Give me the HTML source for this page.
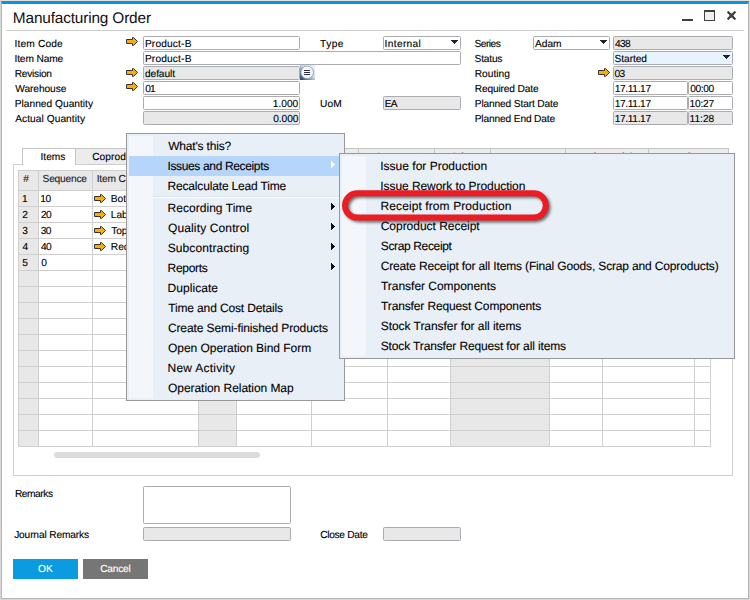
<!DOCTYPE html>
<html><head><meta charset="utf-8"><title>Manufacturing Order</title>
<style>
*{box-sizing:border-box;margin:0;padding:0}
html,body{width:750px;height:600px;overflow:hidden;background:#fff}
body{position:relative;font-family:"Liberation Sans",sans-serif;font-size:11px;color:#000}
.a{position:absolute}
.win{position:absolute;left:0;top:0;width:750px;height:600px;border:1px solid #d8d8d8;border-top-color:#e6ddd8}
.win2{position:absolute;left:1px;top:1px;width:748px;height:598px;border:1px solid #b6b6b6;border-top:3px solid #0496e2}
.title{position:absolute;font-size:15.4px;line-height:18px;color:#111;white-space:nowrap;text-rendering:geometricPrecision}
.hr{position:absolute;left:6px;top:30px;width:738px;height:1px;background:#cfcfcf}
.l,.ft,.c,.tb,.bt{position:absolute;white-space:nowrap;line-height:18px;height:18px;font-size:10.2px;color:#000;text-rendering:geometricPrecision;-webkit-text-stroke:0.12px currentColor}
.f{position:absolute;height:14px;border:1px solid #a9acb1;border-radius:1.5px;background:#fff}
.f.g{background:#e8e8e8}
.f.b{background:#e8f4fd}
.tri{position:absolute}
.arr{position:absolute;width:12px;height:9px}
.ctl{position:absolute;background:#404040}
.tab{position:absolute;top:148px;height:16px;border:1px solid #c4c4c4;border-bottom:none;background:#ececec}
.panel{position:absolute;left:13px;top:164px;width:720px;height:312px;border:1px solid #cfcfcf;background:#fff}
.vl{position:absolute;top:170px;width:1px;height:277px;background:#cfcfcf}
.hl{position:absolute;left:18px;width:693px;height:1px;background:#cfcfcf}
.gc{position:absolute;background:#e8e8e8}
.clip{position:absolute;left:0;top:0;width:126px;height:600px;overflow:hidden}
.menu{position:absolute;border:1px solid #979797;background:#e9eff6}
.gut{position:absolute;background:#f3f7fb}
.mi{position:absolute;white-space:nowrap;font-size:12px;line-height:20px;height:20px;color:#000;text-rendering:geometricPrecision;-webkit-text-stroke:0.1px currentColor}
.ma{position:absolute}
.btn{position:absolute;top:559px;width:65px;height:20px}
.bt{color:#fff}
</style></head><body>
<div class="win"></div><div class="win2"></div>
<div id="t1" class="title" style="left:12.86px;top:9.5px;letter-spacing:-0.166px">Manufacturing Order</div>
<div class="hr"></div>
<div class="ctl" style="left:682px;top:19px;width:11px;height:2px"></div>
<div class="a" style="left:704px;top:10px;width:11px;height:11px;border:1px solid #404040;border-top-width:2px;background:#f0f0f0"></div>
<svg class="a" style="left:727px;top:11px" width="9" height="9" viewBox="0 0 9 9"><path d="M1.3 1.3 L7.7 7.7 M7.7 1.3 L1.3 7.7" stroke="#333" stroke-width="2" stroke-linecap="square" fill="none"/><rect x="2.5" y="2.5" width="4" height="4" fill="#444"/></svg>
<div id="t2" class="l" style="left:14.47px;top:36px;letter-spacing:0.165px">Item Code</div>
<div id="t3" class="l" style="left:14.47px;top:51px;letter-spacing:-0.136px">Item Name</div>
<div id="t4" class="l" style="left:14.72px;top:66px;letter-spacing:-0.251px">Revision</div>
<div id="t5" class="l" style="left:15.24px;top:81px;letter-spacing:-0.079px">Warehouse</div>
<div id="t6" class="l" style="left:14.72px;top:96px;letter-spacing:0.012px">Planned Quantity</div>
<div id="t7" class="l" style="left:15.22px;top:111px;letter-spacing:0.048px">Actual Quantity</div>
<svg class="arr" style="left:126px;top:37px" viewBox="0 0 12 9"><path d="M0.5 2.5H6.5V0.5H7.5L11.5 4.5L7.5 8.5H6.5V6.5H0.5Z" fill="#f7b000" stroke="#3b3036" stroke-width="1"/></svg>
<svg class="arr" style="left:126px;top:68px" viewBox="0 0 12 9"><path d="M0.5 2.5H6.5V0.5H7.5L11.5 4.5L7.5 8.5H6.5V6.5H0.5Z" fill="#f7b000" stroke="#3b3036" stroke-width="1"/></svg>
<svg class="arr" style="left:126px;top:82px" viewBox="0 0 12 9"><path d="M0.5 2.5H6.5V0.5H7.5L11.5 4.5L7.5 8.5H6.5V6.5H0.5Z" fill="#f7b000" stroke="#3b3036" stroke-width="1"/></svg>
<div class="f " style="left:143px;top:36px;width:157px"></div>
<div id="t8" class="ft" style="left:144.88px;top:36px;letter-spacing:0.157px">Product-B</div>
<div class="f " style="left:143px;top:51px;width:318px"></div>
<div id="t9" class="ft" style="left:144.88px;top:51px;letter-spacing:0.157px">Product-B</div>
<div class="f g" style="left:143px;top:66px;width:157px"></div>
<div id="t10" class="ft" style="left:145.01px;top:66px;letter-spacing:-0.096px">default</div>
<div class="f " style="left:143px;top:81px;width:157px"></div>
<div id="t11" class="ft" style="left:145.14px;top:81px;letter-spacing:-0.700px">01</div>
<div class="f " style="left:143px;top:96px;width:157px"></div>
<div id="t12" class="ft" style="left:272.76px;top:96px;letter-spacing:0.003px">1.000</div>
<div class="f g" style="left:143px;top:111px;width:157px"></div>
<div id="t13" class="ft" style="left:273.13px;top:111px;letter-spacing:-0.048px">0.000</div>
<svg class="a" style="left:300px;top:65px" width="15" height="15" viewBox="0 0 15 15"><defs><linearGradient id="ib" x1="0" y1="1" x2="1" y2="0"><stop offset="0" stop-color="#20406a"/><stop offset="0.3" stop-color="#6f8aa8"/><stop offset="0.55" stop-color="#cfdae6"/><stop offset="1" stop-color="#eff4f9"/></linearGradient><radialGradient id="ic" cx="0.42" cy="0.38" r="0.75"><stop offset="0" stop-color="#ffffff"/><stop offset="0.7" stop-color="#eef3f9"/><stop offset="1" stop-color="#c9d7e6"/></radialGradient></defs><rect width="15" height="15" fill="url(#ib)"/><circle cx="7.2" cy="7.4" r="6.3" fill="url(#ic)" stroke="#7f93ab" stroke-width="0.7"/><path d="M4 5.5H10M4 7.5H10M4 9.5H10" stroke="#2b2b45" stroke-width="1"/></svg>
<div id="t14" class="l" style="left:320.02px;top:36px;letter-spacing:0.450px">Type</div>
<div class="f " style="left:383px;top:36px;width:78px"></div>
<div id="t15" class="ft" style="left:384.55px;top:36px;letter-spacing:0.337px">Internal</div>
<svg class="tri" style="left:451px;top:40px" width="7" height="4" viewBox="0 0 7 4" shape-rendering="crispEdges"><path d="M0 0h7v1h-7zM1 1h5v1h-5zM2 2h3v1h-3zM3 3h1v1h-1z" fill="#22222a"/></svg>
<div id="t16" class="l" style="left:319.96px;top:96px;letter-spacing:0.090px">UoM</div>
<div class="f g" style="left:383px;top:96px;width:78px"></div>
<div id="t17" class="ft" style="left:384.78px;top:96px;letter-spacing:-0.700px">EA</div>
<div id="t18" class="l" style="left:474.57px;top:36px;letter-spacing:-0.525px">Series</div>
<div id="t19" class="l" style="left:474.57px;top:51px;letter-spacing:-0.202px">Status</div>
<div id="t20" class="l" style="left:474.72px;top:66px;letter-spacing:0.018px">Routing</div>
<div id="t21" class="l" style="left:474.72px;top:81px;letter-spacing:-0.153px">Required Date</div>
<div id="t22" class="l" style="left:474.72px;top:96px;letter-spacing:-0.138px">Planned Start Date</div>
<div id="t23" class="l" style="left:474.72px;top:111px;letter-spacing:-0.148px">Planned End Date</div>
<div class="f " style="left:533px;top:36px;width:77px"></div>
<div id="t24" class="ft" style="left:535.06px;top:36px;letter-spacing:-0.017px">Adam</div>
<svg class="tri" style="left:600px;top:40px" width="7" height="4" viewBox="0 0 7 4" shape-rendering="crispEdges"><path d="M0 0h7v1h-7zM1 1h5v1h-5zM2 2h3v1h-3zM3 3h1v1h-1z" fill="#22222a"/></svg>
<div class="f g" style="left:613px;top:36px;width:120px"></div>
<div id="t25" class="ft" style="left:615.05px;top:36px;letter-spacing:-0.700px">438</div>
<div class="f b" style="left:613px;top:51px;width:120px"></div>
<div id="t26" class="ft" style="left:614.57px;top:51px;letter-spacing:-0.069px">Started</div>
<svg class="tri" style="left:723px;top:55px" width="7" height="4" viewBox="0 0 7 4" shape-rendering="crispEdges"><path d="M0 0h7v1h-7zM1 1h5v1h-5zM2 2h3v1h-3zM3 3h1v1h-1z" fill="#22222a"/></svg>
<svg class="arr" style="left:598px;top:68px" viewBox="0 0 12 9"><path d="M0.5 2.5H6.5V0.5H7.5L11.5 4.5L7.5 8.5H6.5V6.5H0.5Z" fill="#f7b000" stroke="#3b3036" stroke-width="1"/></svg>
<div class="f g" style="left:613px;top:66px;width:120px"></div>
<div id="t27" class="ft" style="left:614.55px;top:66px;letter-spacing:-0.628px">03</div>
<div class="f " style="left:613px;top:81px;width:75px"></div>
<div id="t28" class="ft" style="left:614.68px;top:81px;letter-spacing:-0.353px">17.11.17</div>
<div class="f " style="left:688px;top:81px;width:45px"></div>
<div id="t29" class="ft" style="left:690.16px;top:81px;letter-spacing:-0.393px">00:00</div>
<div class="f " style="left:613px;top:96px;width:75px"></div>
<div id="t30" class="ft" style="left:614.68px;top:96px;letter-spacing:-0.353px">17.11.17</div>
<div class="f " style="left:688px;top:96px;width:45px"></div>
<div id="t31" class="ft" style="left:689.50px;top:96px;letter-spacing:-0.223px">10:27</div>
<div class="f g" style="left:613px;top:111px;width:75px"></div>
<div id="t32" class="ft" style="left:614.68px;top:111px;letter-spacing:-0.353px">17.11.17</div>
<div class="f g" style="left:688px;top:111px;width:45px"></div>
<div id="t33" class="ft" style="left:689.50px;top:111px;letter-spacing:0.007px">11:28</div>
<div class="panel"></div>
<div class="tab" style="left:75px;width:284px"></div>
<div class="tab" style="left:358px;width:77px"></div>
<div class="tab" style="left:434px;width:57px"></div>
<div class="tab" style="left:490px;width:76px"></div>
<div class="tab" style="left:565px;width:84px"></div>
<div class="tab" style="left:648px;width:81px"></div>
<div class="tab" style="left:22px;width:54px;height:17px;background:#fff"></div>
<div id="t34" class="tb" style="left:40.49px;top:149px;letter-spacing:0.014px">Items</div>
<div class="clip">
<div id="t35" class="tb" style="left:92.17px;top:149px;letter-spacing:0.046px">Coproducts</div>
</div>
<div class="tb" style="left:375px;top:149px">Scraps</div>
<div class="tb" style="left:450.5px;top:149px">Others</div>
<div class="tb" style="left:505px;top:149px">Resources</div>
<div class="tb" style="left:587px;top:149px">Planned Costs</div>
<div class="tb" style="left:664.8px;top:149px">Attachments</div>
<div class="gc" style="left:19px;top:170px;width:19px;height:277px"></div>
<div class="gc" style="left:19px;top:170px;width:691px;height:20px"></div>
<div class="gc" style="left:199px;top:190px;width:37px;height:256px"></div>
<div class="gc" style="left:451px;top:190px;width:98px;height:256px"></div>
<div class="vl" style="left:18px"></div>
<div class="vl" style="left:38px"></div>
<div class="vl" style="left:92px"></div>
<div class="vl" style="left:198px"></div>
<div class="vl" style="left:236px"></div>
<div class="vl" style="left:311px"></div>
<div class="vl" style="left:387px"></div>
<div class="vl" style="left:450px"></div>
<div class="vl" style="left:549px"></div>
<div class="vl" style="left:602px"></div>
<div class="vl" style="left:694px"></div>
<div class="vl" style="left:710px"></div>
<div class="hl" style="top:170px"></div>
<div class="hl" style="top:190px"></div>
<div class="hl" style="top:206px"></div>
<div class="hl" style="top:222px"></div>
<div class="hl" style="top:238px"></div>
<div class="hl" style="top:254px"></div>
<div class="hl" style="top:270px"></div>
<div class="hl" style="top:286px"></div>
<div class="hl" style="top:302px"></div>
<div class="hl" style="top:318px"></div>
<div class="hl" style="top:334px"></div>
<div class="hl" style="top:350px"></div>
<div class="hl" style="top:366px"></div>
<div class="hl" style="top:382px"></div>
<div class="hl" style="top:398px"></div>
<div class="hl" style="top:414px"></div>
<div class="hl" style="top:430px"></div>
<div class="hl" style="top:446px"></div>
<div id="t36" class="c" style="left:23.20px;top:171px;letter-spacing:-0.400px;color:#222">#</div>
<div id="t37" class="c" style="left:42.57px;top:171px;letter-spacing:-0.211px;color:#222">Sequence</div>
<div class="clip">
<div id="t38" class="c" style="left:96.65px;top:171px;letter-spacing:-0.136px;color:#222">Item Code</div>
<div id="t39" class="c" style="left:110.87px;top:191px;letter-spacing:-0.050px">Bottle</div>
<div id="t40" class="c" style="left:110.87px;top:207px;letter-spacing:-0.050px">Label</div>
<div id="t41" class="c" style="left:111.21px;top:223px;letter-spacing:-0.050px">Top</div>
<div id="t42" class="c" style="left:110.87px;top:239px;letter-spacing:-0.050px">Recipe</div>
</div>
<div id="t43" class="c" style="left:21.96px;top:191px;letter-spacing:-0.400px">1</div>
<div id="t44" class="c" style="left:40.36px;top:191px;letter-spacing:-0.612px">10</div>
<svg class="arr" style="left:94px;top:194px" viewBox="0 0 12 9"><path d="M0.5 2.5H6.5V0.5H7.5L11.5 4.5L7.5 8.5H6.5V6.5H0.5Z" fill="#f7b000" stroke="#3b3036" stroke-width="1"/></svg>
<div id="t45" class="c" style="left:22.30px;top:207px;letter-spacing:-0.400px">2</div>
<div id="t46" class="c" style="left:40.96px;top:207px;letter-spacing:-0.700px">20</div>
<svg class="arr" style="left:94px;top:210px" viewBox="0 0 12 9"><path d="M0.5 2.5H6.5V0.5H7.5L11.5 4.5L7.5 8.5H6.5V6.5H0.5Z" fill="#f7b000" stroke="#3b3036" stroke-width="1"/></svg>
<div id="t47" class="c" style="left:22.37px;top:223px;letter-spacing:-0.400px">3</div>
<div id="t48" class="c" style="left:40.86px;top:223px;letter-spacing:-0.700px">30</div>
<svg class="arr" style="left:94px;top:226px" viewBox="0 0 12 9"><path d="M0.5 2.5H6.5V0.5H7.5L11.5 4.5L7.5 8.5H6.5V6.5H0.5Z" fill="#f7b000" stroke="#3b3036" stroke-width="1"/></svg>
<div id="t49" class="c" style="left:22.48px;top:239px;letter-spacing:-0.400px">4</div>
<div id="t50" class="c" style="left:41.05px;top:239px;letter-spacing:-0.700px">40</div>
<svg class="arr" style="left:94px;top:242px" viewBox="0 0 12 9"><path d="M0.5 2.5H6.5V0.5H7.5L11.5 4.5L7.5 8.5H6.5V6.5H0.5Z" fill="#f7b000" stroke="#3b3036" stroke-width="1"/></svg>
<div id="t51" class="c" style="left:22.30px;top:255px;letter-spacing:-0.400px">5</div>
<div id="t52" class="c" style="left:41.14px;top:255px;letter-spacing:-0.400px">0</div>
<div class="a" style="left:54px;top:452px;width:206px;height:6px;border-radius:3px;background:#dcdcdc"></div>
<div id="t53" class="l" style="left:14.88px;top:486px;letter-spacing:-0.438px">Remarks</div>
<div class="f " style="left:143px;top:486px;width:148px;height:38px"></div>
<div id="t54" class="l" style="left:14.17px;top:527px;letter-spacing:-0.150px">Journal Remarks</div>
<div class="f g" style="left:143px;top:527px;width:148px"></div>
<div id="t55" class="l" style="left:320.17px;top:527px;letter-spacing:-0.294px">Close Date</div>
<div class="f g" style="left:383px;top:527px;width:78px"></div>
<div class="btn" style="left:13px;background:#0a9be1"></div>
<div class="btn" style="left:83px;background:#767676"></div>
<div id="t56" class="bt" style="left:38.02px;top:561px;letter-spacing:-0.028px">OK</div>
<div id="t57" class="bt" style="left:100.17px;top:561px;letter-spacing:-0.219px">Cancel</div>
<div class="menu" style="left:126px;top:133px;width:219px;height:268px"></div>
<div class="gut" style="left:129px;top:136px;width:24px;height:262px"></div>
<div class="a" style="left:129px;top:156px;width:213px;height:20px;background:#b5d5fb"></div>
<div class="a" style="left:153px;top:196px;width:189px;height:1px;background:#dde3ea"></div>
<div class="a" style="left:153px;top:197px;width:189px;height:1px;background:#fdfeff"></div>
<div id="t58" class="mi" style="left:168.17px;top:136px;letter-spacing:-0.175px">What's this?</div>
<div id="t59" class="mi" style="left:167.43px;top:156px;letter-spacing:-0.350px">Issues and Receipts</div>
<svg class="ma" style="left:331px;top:161px" width="4" height="7" viewBox="0 0 4 7" shape-rendering="crispEdges"><path d="M0 0h1v7h-1zM1 1h1v5h-1zM2 2h1v3h-1zM3 3h1v1h-1z" fill="#fff"/></svg>
<div id="t60" class="mi" style="left:167.50px;top:176px;letter-spacing:-0.164px">Recalculate Lead Time</div>
<div id="t61" class="mi" style="left:167.50px;top:198px;letter-spacing:0.042px">Recording Time</div>
<svg class="ma" style="left:331px;top:203px" width="4" height="7" viewBox="0 0 4 7" shape-rendering="crispEdges"><path d="M0 0h1v7h-1zM1 1h1v5h-1zM2 2h1v3h-1zM3 3h1v1h-1z" fill="#111"/></svg>
<div id="t62" class="mi" style="left:168.01px;top:218px;letter-spacing:0.130px">Quality Control</div>
<svg class="ma" style="left:331px;top:223px" width="4" height="7" viewBox="0 0 4 7" shape-rendering="crispEdges"><path d="M0 0h1v7h-1zM1 1h1v5h-1zM2 2h1v3h-1zM3 3h1v1h-1z" fill="#111"/></svg>
<div id="t63" class="mi" style="left:167.70px;top:238px;letter-spacing:0.110px">Subcontracting</div>
<svg class="ma" style="left:331px;top:243px" width="4" height="7" viewBox="0 0 4 7" shape-rendering="crispEdges"><path d="M0 0h1v7h-1zM1 1h1v5h-1zM2 2h1v3h-1zM3 3h1v1h-1z" fill="#111"/></svg>
<div id="t64" class="mi" style="left:167.50px;top:258px;letter-spacing:-0.279px">Reports</div>
<svg class="ma" style="left:331px;top:263px" width="4" height="7" viewBox="0 0 4 7" shape-rendering="crispEdges"><path d="M0 0h1v7h-1zM1 1h1v5h-1zM2 2h1v3h-1zM3 3h1v1h-1z" fill="#111"/></svg>
<div id="t65" class="mi" style="left:167.48px;top:278px;letter-spacing:0.068px">Duplicate</div>
<div id="t66" class="mi" style="left:168.17px;top:298px;letter-spacing:-0.132px">Time and Cost Details</div>
<div id="t67" class="mi" style="left:167.91px;top:318px;letter-spacing:-0.098px">Create Semi-finished Products</div>
<div id="t68" class="mi" style="left:168.01px;top:338px;letter-spacing:-0.040px">Open Operation Bind Form</div>
<div id="t69" class="mi" style="left:167.55px;top:358px;letter-spacing:0.241px">New Activity</div>
<div id="t70" class="mi" style="left:168.01px;top:378px;letter-spacing:-0.051px">Operation Relation Map</div>
<div class="menu" style="left:339px;top:153px;width:396px;height:206px"></div>
<div class="gut" style="left:342px;top:156px;width:24px;height:200px"></div>
<div id="t71" class="mi" style="left:380.26px;top:156px;letter-spacing:0.005px">Issue for Production</div>
<div id="t72" class="mi" style="left:380.26px;top:176px;letter-spacing:-0.065px">Issue Rework to Production</div>
<div id="t73" class="mi" style="left:380.52px;top:196px;letter-spacing:0.098px">Receipt from Production</div>
<div id="t74" class="mi" style="left:380.70px;top:216px;letter-spacing:-0.023px">Coproduct Receipt</div>
<div id="t75" class="mi" style="left:380.75px;top:236px;letter-spacing:-0.357px">Scrap Receipt</div>
<div id="t76" class="mi" style="left:380.70px;top:256px;letter-spacing:-0.151px">Create Receipt for all Items (Final Goods, Scrap and Coproducts)</div>
<div id="t77" class="mi" style="left:381.02px;top:276px;letter-spacing:-0.032px">Transfer Components</div>
<div id="t78" class="mi" style="left:381.02px;top:296px;letter-spacing:-0.134px">Transfer Request Components</div>
<div id="t79" class="mi" style="left:380.75px;top:316px;letter-spacing:-0.053px">Stock Transfer for all items</div>
<div id="t80" class="mi" style="left:380.75px;top:336px;letter-spacing:-0.137px">Stock Transfer Request for all items</div>
<svg class="a" style="left:330px;top:180px" width="240" height="56" viewBox="0 0 240 56"><defs><filter id="sh" x="-10%" y="-30%" width="120%" height="170%"><feGaussianBlur stdDeviation="1.8"/></filter></defs><rect x="17" y="15.2" width="200.8" height="24.4" rx="12.2" fill="none" stroke="#000" stroke-opacity="0.55" stroke-width="5.6" filter="url(#sh)"/><rect x="15" y="13.2" width="200.8" height="24.4" rx="12.2" fill="none" stroke="#ec1c24" stroke-width="6"/></svg>
</body></html>
